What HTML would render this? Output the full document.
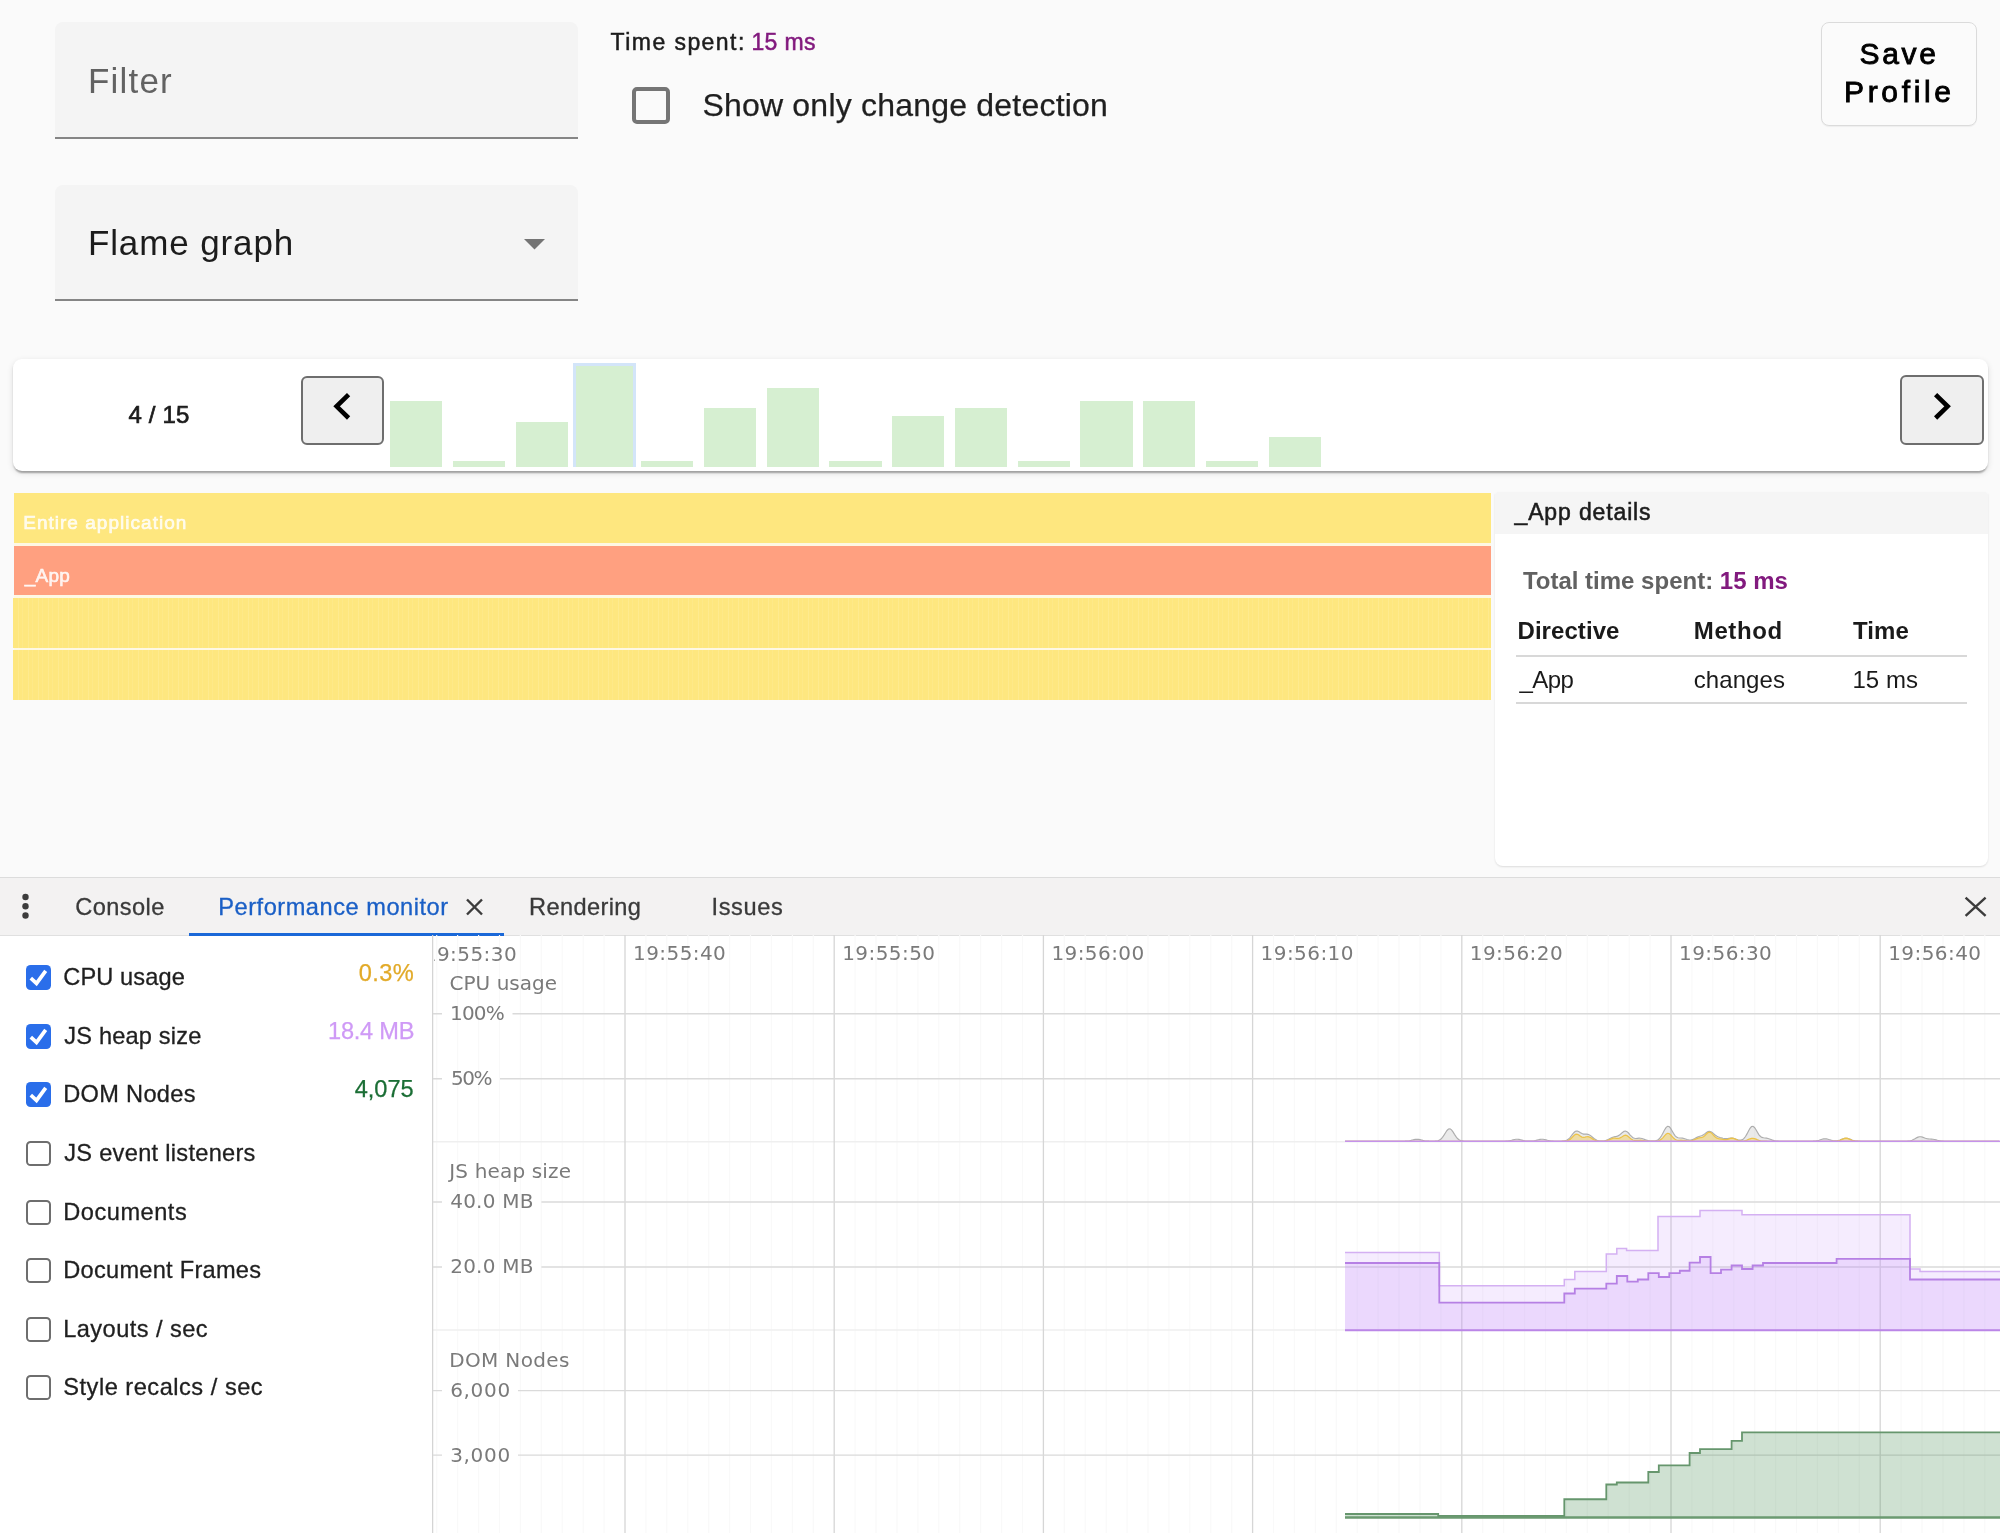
<!DOCTYPE html><html lang="en"><head><meta charset="utf-8"><title>Angular DevTools Profiler</title><style>
html,body{margin:0;padding:0}
body{width:2000px;height:1533px;overflow:hidden;background:#fafafa;position:relative;font-family:"Liberation Sans",Arial,sans-serif}
.tx{position:absolute;line-height:1;white-space:pre;font-family:"Liberation Sans",Arial,sans-serif}
.dv{font-family:"DejaVu Sans","Liberation Sans",sans-serif}
.abs{position:absolute}
main{position:absolute;left:0;top:0;width:2000px;height:1533px;will-change:transform}
.field{position:absolute;left:55px;width:523px;height:114.5px;background:#f4f4f4;border-radius:8px 8px 0 0;border-bottom:2px solid #858585}
.card{position:absolute;left:13px;top:358.5px;width:1974.5px;height:112px;background:#fff;border-radius:9px;box-shadow:0 4px 2px -2px rgba(0,0,0,.2),0 2px 2px rgba(0,0,0,.14),0 2px 6px rgba(0,0,0,.12)}
.navbtn{position:absolute;box-sizing:border-box;background:#efefef;border:2px solid #6e6e6e;border-radius:6px}
.bar{position:absolute;background:#d6efd1}
.frow{position:absolute;left:14px;width:1477px;height:50px}
.cb{position:absolute;left:25.75px;width:25px;height:25px;box-sizing:border-box;border-radius:4.6px}
.cb.on{background:#2a6eea}
.cb.off{background:#fff;border:2px solid #6e6e6e}
</style></head><body><main>
<section class="controls">
<div class="field" style="top:22px"></div>
<div class="tx" id="t_filter" style="left:87.90px;top:63.00px;font-size:35px;letter-spacing:1.220px;color:#626262;">Filter</div>
<div class="field" style="top:184.5px"></div>
<div class="tx" id="t_flame" style="left:87.90px;top:225.00px;font-size:35px;letter-spacing:0.890px;color:#1c1c1c;">Flame graph</div>
<svg class="abs" style="left:523.5px;top:239px" width="21" height="11" viewBox="0 0 21 11"><path d="M0 0H21L10.5 10.5Z" fill="#747474"/></svg>
<div class="tx" id="t_timespent" style="left:610.60px;top:31.00px;font-size:23px;letter-spacing:1.440px;-webkit-text-stroke:0.5px;color:#1c1c1c;">Time spent:</div>
<div class="tx" id="t_timeval" style="left:751.40px;top:31.00px;font-size:23px;letter-spacing:0.400px;-webkit-text-stroke:0.5px;color:#821a7e;">15 ms</div>
<div class="abs" style="left:632px;top:86.5px;width:38px;height:37.5px;box-sizing:border-box;border:4px solid #757575;border-radius:5px"></div>
<div class="tx" id="t_showonly" style="left:702.40px;top:89.00px;font-size:32px;letter-spacing:0.208px;-webkit-text-stroke:0.25px;color:#1f1f1f;">Show only change detection</div>
<div class="abs" style="left:1821px;top:22px;width:156px;height:103.5px;box-sizing:border-box;border:1.7px solid #dbdbdb;border-radius:8px;background:#fbfbfb;box-shadow:0 1px 1px rgba(0,0,0,.05)"></div>
<div class="tx" id="t_save" style="left:1859.50px;top:39.00px;font-size:30px;letter-spacing:2.667px;-webkit-text-stroke:0.9px;color:#000;">Save</div>
<div class="tx" id="t_profile" style="left:1844.00px;top:77.00px;font-size:30px;letter-spacing:3.667px;-webkit-text-stroke:0.9px;color:#000;">Profile</div>
</section>
<section class="frames">
<div class="card"></div>
<div class="tx" id="t_count" style="left:128.50px;top:403.00px;font-size:24px;letter-spacing:0.160px;-webkit-text-stroke:0.7px;color:#1c1c1c;">4 / 15</div>
<div class="navbtn" style="left:301px;top:375.5px;width:83px;height:69.25px"></div>
<svg class="abs" style="left:328px;top:388px" width="30" height="36" viewBox="0 0 30 36"><path d="M20.6 6.6L8.6 18.3L20.6 30" fill="none" stroke="#000" stroke-width="4.6"/></svg>
<div class="navbtn" style="left:1900.25px;top:375.25px;width:83.25px;height:69.25px"></div>
<svg class="abs" style="left:1927px;top:388px" width="30" height="36" viewBox="0 0 30 36"><path d="M8.6 6.6L20.6 18.3L8.6 30" fill="none" stroke="#000" stroke-width="4.6"/></svg>
<div class="bar" style="left:390.00px;top:401.25px;width:52.25px;height:65.25px"></div>
<div class="bar" style="left:452.75px;top:460.75px;width:52.25px;height:5.75px"></div>
<div class="bar" style="left:515.50px;top:422.00px;width:52.25px;height:44.50px"></div>
<div class="bar" style="left:572.75px;top:362.5px;width:62.75px;height:104px;box-sizing:border-box;border:3.2px solid #d3e5f9;border-bottom:none"></div>
<div class="bar" style="left:641.00px;top:460.75px;width:52.25px;height:5.75px"></div>
<div class="bar" style="left:703.75px;top:408.25px;width:52.25px;height:58.25px"></div>
<div class="bar" style="left:766.50px;top:387.50px;width:52.25px;height:79.00px"></div>
<div class="bar" style="left:829.25px;top:460.75px;width:52.25px;height:5.75px"></div>
<div class="bar" style="left:892.00px;top:416.00px;width:52.25px;height:50.50px"></div>
<div class="bar" style="left:954.75px;top:408.25px;width:52.25px;height:58.25px"></div>
<div class="bar" style="left:1017.50px;top:460.75px;width:52.25px;height:5.75px"></div>
<div class="bar" style="left:1080.25px;top:401.25px;width:52.25px;height:65.25px"></div>
<div class="bar" style="left:1143.00px;top:401.25px;width:52.25px;height:65.25px"></div>
<div class="bar" style="left:1205.75px;top:460.75px;width:52.25px;height:5.75px"></div>
<div class="bar" style="left:1268.50px;top:436.75px;width:52.25px;height:29.75px"></div>
</section>
<section class="flame">
<div class="abs" style="left:14px;top:493px;width:1477px;height:207px;background:#fef8e4"></div>
<div class="frow" style="top:493px;height:49.6px;background:#fee77f"></div>
<div class="frow" style="top:545.6px;height:49.8px;background:#ffa080"></div>
<div class="frow" style="left:13px;width:1478px;top:598.3px;height:49.6px;background:repeating-linear-gradient(90deg,rgba(255,255,255,0) 0,rgba(255,255,255,0) 5px,rgba(255,255,255,.12) 5px,rgba(255,255,255,.12) 6px,rgba(255,255,255,0) 6px,rgba(255,255,255,0) 9px,rgba(255,255,255,.07) 9px,rgba(255,255,255,.07) 10px),#fee77f"></div>
<div class="frow" style="left:13px;width:1478px;top:650.4px;height:49.6px;background:repeating-linear-gradient(90deg,rgba(255,255,255,0) 0,rgba(255,255,255,0) 5px,rgba(255,255,255,.12) 5px,rgba(255,255,255,.12) 6px,rgba(255,255,255,0) 6px,rgba(255,255,255,0) 9px,rgba(255,255,255,.07) 9px,rgba(255,255,255,.07) 10px),#fee77f"></div>
<div class="tx" id="t_entire" style="left:23.20px;top:513.00px;font-size:19px;letter-spacing:1.024px;-webkit-text-stroke:0.7px;color:rgba(255,255,255,0.8);">Entire application</div>
<div class="tx" id="t_app" style="left:24.80px;top:566.00px;font-size:19px;letter-spacing:0.200px;-webkit-text-stroke:0.6px;color:rgba(255,255,255,0.85);">_App</div>
</section>
<section class="details">
<div class="abs" style="left:1495px;top:491.7px;width:493px;height:374.5px;background:#fff;border-radius:3px 3px 8px 8px;box-shadow:0 1px 2px rgba(0,0,0,.12);overflow:hidden"><div style="height:42.2px;background:#f5f5f5"></div></div>
<div class="tx" id="t_appdetails" style="left:1514.50px;top:501.00px;font-size:23px;letter-spacing:0.864px;-webkit-text-stroke:0.55px;color:#1c1c1c;">_App details</div>
<div class="tx" id="t_total" style="left:1522.90px;top:569.00px;font-size:24px;font-weight:700;"><span style="color:#616161">Total time spent: </span><span style="color:#821a7e">15 ms</span></div>
<div class="tx" id="t_hdir" style="left:1517.50px;top:619.00px;font-size:24px;letter-spacing:0.062px;font-weight:700;color:#1a1a1a;">Directive</div>
<div class="tx" id="t_hmeth" style="left:1693.80px;top:619.00px;font-size:24px;letter-spacing:0.600px;font-weight:700;color:#1a1a1a;">Method</div>
<div class="tx" id="t_htime" style="left:1853.00px;top:619.00px;font-size:24px;letter-spacing:0.067px;font-weight:700;color:#1a1a1a;">Time</div>
<div class="abs" style="left:1516px;top:654.7px;width:451px;height:2px;background:#d8d8d8"></div>
<div class="tx" id="t_rdir" style="left:1519.50px;top:668.00px;font-size:24px;letter-spacing:-0.567px;color:#1a1a1a;">_App</div>
<div class="tx" id="t_rmeth" style="left:1693.80px;top:668.00px;font-size:24px;letter-spacing:0.067px;color:#1a1a1a;">changes</div>
<div class="tx" id="t_rtime" style="left:1852.40px;top:668.00px;font-size:24px;letter-spacing:0.050px;color:#1a1a1a;">15 ms</div>
<div class="abs" style="left:1516px;top:702.2px;width:451px;height:2px;background:#d8d8d8"></div>
</section>
<section class="drawer">
<div class="abs" style="left:0;top:876.5px;width:2000px;height:657px;background:#fff"></div>
<div class="abs" style="left:0;top:876.5px;width:2000px;height:59.5px;background:#f3f2f2;border-top:1.5px solid #dcdcdc;border-bottom:1.5px solid #e0e0e0;box-sizing:border-box"></div>
<svg class="abs" style="left:18px;top:890px" width="16" height="32" viewBox="0 0 16 32"><circle cx="7.5" cy="7" r="3.2" fill="#3c3c3c"/><circle cx="7.5" cy="16.25" r="3.2" fill="#3c3c3c"/><circle cx="7.5" cy="25.5" r="3.2" fill="#3c3c3c"/></svg>
<div class="tx" id="t_console" style="left:75.25px;top:896.00px;font-size:23.6px;letter-spacing:0.417px;-webkit-text-stroke:0.3px;color:#3a3a3a;">Console</div>
<div class="tx" id="t_perfmon" style="left:218.25px;top:896.00px;font-size:23.6px;letter-spacing:0.528px;-webkit-text-stroke:0.3px;color:#1a5fc6;">Performance monitor</div>
<div class="tx" id="t_rendering" style="left:529.00px;top:896.00px;font-size:23.6px;letter-spacing:0.375px;-webkit-text-stroke:0.3px;color:#3a3a3a;">Rendering</div>
<div class="tx" id="t_issues" style="left:711.50px;top:896.00px;font-size:23.6px;letter-spacing:0.600px;-webkit-text-stroke:0.3px;color:#3a3a3a;">Issues</div>
<svg class="abs" style="left:464px;top:896px" width="22" height="22" viewBox="0 0 22 22"><path d="M3 3.5L18 18.5M18 3.5L3 18.5" stroke="#3c3c3c" stroke-width="2.4" fill="none"/></svg>
<div class="abs" style="left:188.75px;top:932.6px;width:315.5px;height:3.2px;background:#1a68d8"></div>
<svg class="abs" style="left:1962px;top:894px" width="26" height="26" viewBox="0 0 26 26"><path d="M3.6 3.6L23.6 21.8M23.6 3.6L3.6 21.8" stroke="#3c3c3c" stroke-width="2.4" fill="none"/></svg>
<div class="cb on" style="top:965.00px"><svg width="25" height="25" viewBox="0 0 25 25" style="display:block"><path d="M4.8 13.2L10.5 18.4L19.7 5.8" fill="none" stroke="#fff" stroke-width="3.7"/></svg></div>
<div class="cb on" style="top:1023.63px"><svg width="25" height="25" viewBox="0 0 25 25" style="display:block"><path d="M4.8 13.2L10.5 18.4L19.7 5.8" fill="none" stroke="#fff" stroke-width="3.7"/></svg></div>
<div class="cb on" style="top:1082.26px"><svg width="25" height="25" viewBox="0 0 25 25" style="display:block"><path d="M4.8 13.2L10.5 18.4L19.7 5.8" fill="none" stroke="#fff" stroke-width="3.7"/></svg></div>
<div class="cb off" style="top:1140.89px"></div>
<div class="cb off" style="top:1199.52px"></div>
<div class="cb off" style="top:1258.15px"></div>
<div class="cb off" style="top:1316.78px"></div>
<div class="cb off" style="top:1375.41px"></div>
<div class="tx" id="t_lab0" style="left:63.25px;top:966.00px;font-size:23.6px;letter-spacing:0.125px;-webkit-text-stroke:0.3px;color:#1f1f1f;">CPU usage</div>
<div class="tx" id="t_lab1" style="left:64.25px;top:1025.00px;font-size:23.6px;letter-spacing:0.186px;-webkit-text-stroke:0.3px;color:#1f1f1f;">JS heap size</div>
<div class="tx" id="t_lab2" style="left:63.25px;top:1083.00px;font-size:23.6px;letter-spacing:0.306px;-webkit-text-stroke:0.3px;color:#1f1f1f;">DOM Nodes</div>
<div class="tx" id="t_lab3" style="left:64.25px;top:1142.00px;font-size:23.6px;letter-spacing:0.291px;-webkit-text-stroke:0.3px;color:#1f1f1f;">JS event listeners</div>
<div class="tx" id="t_lab4" style="left:63.25px;top:1201.00px;font-size:23.6px;letter-spacing:0.519px;-webkit-text-stroke:0.3px;color:#1f1f1f;">Documents</div>
<div class="tx" id="t_lab5" style="left:63.25px;top:1259.00px;font-size:23.6px;letter-spacing:0.268px;-webkit-text-stroke:0.3px;color:#1f1f1f;">Document Frames</div>
<div class="tx" id="t_lab6" style="left:63.25px;top:1318.00px;font-size:23.6px;letter-spacing:0.438px;-webkit-text-stroke:0.3px;color:#1f1f1f;">Layouts / sec</div>
<div class="tx" id="t_lab7" style="left:63.25px;top:1376.00px;font-size:23.6px;letter-spacing:0.514px;-webkit-text-stroke:0.3px;color:#1f1f1f;">Style recalcs / sec</div>
<div class="tx" id="t_v0" style="left:358.75px;top:962.00px;font-size:23.6px;letter-spacing:0.417px;-webkit-text-stroke:0.25px;color:#e2aa28;">0.3%</div>
<div class="tx" id="t_v1" style="left:328.00px;top:1020.00px;font-size:23.6px;letter-spacing:-0.233px;-webkit-text-stroke:0.25px;color:#cf9af6;">18.4 MB</div>
<div class="tx" id="t_v2" style="left:354.70px;top:1078.00px;font-size:23.6px;letter-spacing:-0.025px;-webkit-text-stroke:0.25px;color:#1b6e35;">4,075</div>
</section>
<section class="perfmon-chart">
<svg class="abs" style="left:432px;top:935px" width="1568" height="598" viewBox="432 935 1568 598">
<path d="M436.7 935V1533M457.6 935V1533M478.6 935V1533M499.5 935V1533M520.4 935V1533M541.3 935V1533M562.2 935V1533M583.2 935V1533M604.1 935V1533M645.9 935V1533M666.8 935V1533M687.8 935V1533M708.7 935V1533M729.6 935V1533M750.5 935V1533M771.4 935V1533M792.4 935V1533M813.3 935V1533M855.1 935V1533M876.0 935V1533M897.0 935V1533M917.9 935V1533M938.8 935V1533M959.7 935V1533M980.6 935V1533M1001.6 935V1533M1022.5 935V1533M1064.3 935V1533M1085.2 935V1533M1106.2 935V1533M1127.1 935V1533M1148.0 935V1533M1168.9 935V1533M1189.8 935V1533M1210.8 935V1533M1231.7 935V1533M1273.5 935V1533M1294.4 935V1533M1315.4 935V1533M1336.3 935V1533M1357.2 935V1533M1378.1 935V1533M1399.0 935V1533M1420.0 935V1533M1440.9 935V1533M1482.7 935V1533M1503.6 935V1533M1524.6 935V1533M1545.5 935V1533M1566.4 935V1533M1587.3 935V1533M1608.2 935V1533M1629.2 935V1533M1650.1 935V1533M1691.9 935V1533M1712.8 935V1533M1733.8 935V1533M1754.7 935V1533M1775.6 935V1533M1796.5 935V1533M1817.4 935V1533M1838.4 935V1533M1859.3 935V1533M1901.1 935V1533M1922.0 935V1533M1943.0 935V1533M1963.9 935V1533M1984.8 935V1533" stroke="#f9f9f9" stroke-width="1.2" fill="none"/>
<path d="M433 1141.7H2000M433 1330H2000" stroke="#efefef" stroke-width="1.5" fill="none"/>
<path d="M625.0 935V1533M834.2 935V1533M1043.4 935V1533M1252.6 935V1533M1461.8 935V1533M1671.0 935V1533M1880.2 935V1533" stroke="#d6d6d6" stroke-width="1.3" fill="none"/>
<path d="M432.5 935V1533" stroke="#d4d4d4" stroke-width="1.5" fill="none"/>
<path d="M512.5 1013.75H2000M433 1013.75H442M500.0 1078.75H2000M433 1078.75H442M541.4 1202.00H2000M433 1202.00H442M541.4 1267.00H2000M433 1267.00H442M518.0 1390.60H2000M433 1390.60H442M518.0 1455.20H2000M433 1455.20H442" stroke="#dadada" stroke-width="1.3" fill="none"/>
<path d="M1345.0 1141.25L1346.5 1141.25L1348.0 1141.25L1349.5 1141.25L1351.0 1141.25L1352.5 1141.25L1354.0 1141.25L1355.5 1141.25L1357.0 1141.25L1358.5 1141.25L1360.0 1141.25L1361.5 1141.25L1363.0 1141.25L1364.5 1141.25L1366.0 1141.25L1367.5 1141.25L1369.0 1141.25L1370.5 1141.25L1372.0 1141.25L1373.5 1141.25L1375.0 1141.25L1376.5 1141.25L1378.0 1141.25L1379.5 1141.25L1381.0 1141.25L1382.5 1141.25L1384.0 1141.25L1385.5 1141.25L1387.0 1141.25L1388.5 1141.25L1390.0 1141.25L1391.5 1141.25L1393.0 1141.25L1394.5 1141.25L1396.0 1141.25L1397.5 1141.25L1399.0 1141.25L1400.5 1141.25L1402.0 1141.24L1403.5 1141.22L1405.0 1141.18L1406.5 1141.10L1408.0 1140.96L1409.5 1140.72L1411.0 1140.40L1412.5 1140.01L1414.0 1139.63L1415.5 1139.35L1417.0 1139.25L1418.5 1139.35L1420.0 1139.63L1421.5 1140.01L1423.0 1140.40L1424.5 1140.72L1426.0 1140.95L1427.5 1141.10L1429.0 1141.18L1430.5 1141.22L1432.0 1141.23L1433.5 1141.22L1435.0 1141.16L1436.5 1141.02L1438.0 1140.70L1439.5 1140.07L1441.0 1138.98L1442.5 1137.32L1444.0 1135.13L1445.5 1132.69L1447.0 1130.47L1448.5 1129.04L1450.0 1128.82L1451.5 1129.88L1453.0 1131.89L1454.5 1134.33L1456.0 1136.64L1457.5 1138.49L1459.0 1139.77L1460.5 1140.53L1462.0 1140.94L1463.5 1141.13L1465.0 1141.21L1466.5 1141.24L1468.0 1141.25L1469.5 1141.25L1471.0 1141.25L1472.5 1141.25L1474.0 1141.25L1475.5 1141.25L1477.0 1141.25L1478.5 1141.25L1480.0 1141.25L1481.5 1141.25L1483.0 1141.25L1484.5 1141.25L1486.0 1141.25L1487.5 1141.25L1489.0 1141.25L1490.5 1141.25L1492.0 1141.25L1493.5 1141.25L1495.0 1141.25L1496.5 1141.25L1498.0 1141.25L1499.5 1141.25L1501.0 1141.25L1502.5 1141.24L1504.0 1141.21L1505.5 1141.16L1507.0 1141.06L1508.5 1140.89L1510.0 1140.62L1511.5 1140.27L1513.0 1139.88L1514.5 1139.52L1516.0 1139.30L1517.5 1139.26L1519.0 1139.43L1520.5 1139.75L1522.0 1140.14L1523.5 1140.51L1525.0 1140.81L1526.5 1141.01L1528.0 1141.12L1529.5 1141.15L1531.0 1141.12L1532.5 1141.01L1534.0 1140.81L1535.5 1140.51L1537.0 1140.14L1538.5 1139.75L1540.0 1139.43L1541.5 1139.26L1543.0 1139.30L1544.5 1139.52L1546.0 1139.88L1547.5 1140.27L1549.0 1140.62L1550.5 1140.89L1552.0 1141.06L1553.5 1141.16L1555.0 1141.21L1556.5 1141.24L1558.0 1141.24L1559.5 1141.24L1561.0 1141.22L1562.5 1141.15L1564.0 1141.00L1565.5 1140.68L1567.0 1140.06L1568.5 1139.05L1570.0 1137.56L1571.5 1135.70L1573.0 1133.73L1574.5 1132.06L1576.0 1131.09L1577.5 1131.00L1579.0 1131.66L1580.5 1132.68L1582.0 1133.58L1583.5 1134.08L1585.0 1134.18L1586.5 1134.15L1588.0 1134.31L1589.5 1134.90L1591.0 1135.93L1592.5 1137.20L1594.0 1138.47L1595.5 1139.53L1597.0 1140.29L1598.5 1140.76L1600.0 1140.99L1601.5 1141.06L1603.0 1140.99L1604.5 1140.77L1606.0 1140.36L1607.5 1139.77L1609.0 1139.02L1610.5 1138.21L1612.0 1137.48L1613.5 1136.94L1615.0 1136.60L1616.5 1136.32L1618.0 1135.86L1619.5 1135.02L1621.0 1133.80L1622.5 1132.44L1624.0 1131.38L1625.5 1131.05L1627.0 1131.64L1628.5 1133.01L1630.0 1134.76L1631.5 1136.43L1633.0 1137.66L1634.5 1138.31L1636.0 1138.46L1637.5 1138.33L1639.0 1138.19L1640.5 1138.22L1642.0 1138.50L1643.5 1139.00L1645.0 1139.59L1646.5 1140.14L1648.0 1140.59L1649.5 1140.89L1651.0 1141.06L1652.5 1141.12L1654.0 1141.07L1655.5 1140.87L1657.0 1140.39L1658.5 1139.47L1660.0 1137.94L1661.5 1135.72L1663.0 1132.94L1664.5 1130.02L1666.0 1127.60L1667.5 1126.32L1669.0 1126.54L1670.5 1128.18L1672.0 1130.69L1673.5 1133.37L1675.0 1135.60L1676.5 1137.06L1678.0 1137.78L1679.5 1138.00L1681.0 1138.04L1682.5 1138.16L1684.0 1138.47L1685.5 1138.94L1687.0 1139.45L1688.5 1139.85L1690.0 1140.00L1691.5 1139.83L1693.0 1139.35L1694.5 1138.65L1696.0 1137.86L1697.5 1137.13L1699.0 1136.54L1700.5 1136.05L1702.0 1135.50L1703.5 1134.71L1705.0 1133.64L1706.5 1132.47L1708.0 1131.55L1709.5 1131.23L1711.0 1131.67L1712.5 1132.72L1714.0 1134.06L1715.5 1135.32L1717.0 1136.29L1718.5 1136.96L1720.0 1137.45L1721.5 1137.87L1723.0 1138.25L1724.5 1138.55L1726.0 1138.67L1727.5 1138.59L1729.0 1138.38L1730.5 1138.18L1732.0 1138.15L1733.5 1138.36L1735.0 1138.80L1736.5 1139.35L1738.0 1139.86L1739.5 1140.18L1741.0 1140.15L1742.5 1139.62L1744.0 1138.43L1745.5 1136.50L1747.0 1133.90L1748.5 1130.97L1750.0 1128.30L1751.5 1126.58L1753.0 1126.28L1754.5 1127.47L1756.0 1129.74L1757.5 1132.40L1759.0 1134.78L1760.5 1136.48L1762.0 1137.42L1763.5 1137.80L1765.0 1137.95L1766.5 1138.12L1768.0 1138.47L1769.5 1138.99L1771.0 1139.58L1772.5 1140.14L1774.0 1140.59L1775.5 1140.89L1777.0 1141.08L1778.5 1141.18L1780.0 1141.22L1781.5 1141.24L1783.0 1141.25L1784.5 1141.25L1786.0 1141.25L1787.5 1141.25L1789.0 1141.25L1790.5 1141.25L1792.0 1141.25L1793.5 1141.25L1795.0 1141.25L1796.5 1141.25L1798.0 1141.25L1799.5 1141.25L1801.0 1141.25L1802.5 1141.25L1804.0 1141.25L1805.5 1141.25L1807.0 1141.25L1808.5 1141.25L1810.0 1141.24L1811.5 1141.22L1813.0 1141.17L1814.5 1141.07L1816.0 1140.88L1817.5 1140.59L1819.0 1140.18L1820.5 1139.70L1822.0 1139.23L1823.5 1138.88L1825.0 1138.75L1826.5 1138.88L1828.0 1139.23L1829.5 1139.70L1831.0 1140.17L1832.5 1140.55L1834.0 1140.78L1835.5 1140.84L1837.0 1140.72L1838.5 1140.42L1840.0 1139.96L1841.5 1139.39L1843.0 1138.82L1844.5 1138.41L1846.0 1138.25L1847.5 1138.41L1849.0 1138.82L1850.5 1139.39L1852.0 1139.97L1853.5 1140.46L1855.0 1140.81L1856.5 1141.03L1858.0 1141.15L1859.5 1141.21L1861.0 1141.24L1862.5 1141.25L1864.0 1141.25L1865.5 1141.25L1867.0 1141.25L1868.5 1141.25L1870.0 1141.25L1871.5 1141.25L1873.0 1141.25L1874.5 1141.25L1876.0 1141.25L1877.5 1141.25L1879.0 1141.25L1880.5 1141.25L1882.0 1141.25L1883.5 1141.25L1885.0 1141.25L1886.5 1141.25L1888.0 1141.25L1889.5 1141.25L1891.0 1141.25L1892.5 1141.25L1894.0 1141.25L1895.5 1141.25L1897.0 1141.25L1898.5 1141.25L1900.0 1141.25L1901.5 1141.25L1903.0 1141.25L1904.5 1141.23L1906.0 1141.21L1907.5 1141.14L1909.0 1140.99L1910.5 1140.72L1912.0 1140.26L1913.5 1139.59L1915.0 1138.76L1916.5 1137.87L1918.0 1137.14L1919.5 1136.73L1921.0 1136.74L1922.5 1137.13L1924.0 1137.73L1925.5 1138.31L1927.0 1138.73L1928.5 1138.94L1930.0 1139.01L1931.5 1139.06L1933.0 1139.21L1934.5 1139.49L1936.0 1139.87L1937.5 1140.27L1939.0 1140.62L1940.5 1140.89L1942.0 1141.06L1943.5 1141.16L1945.0 1141.21L1946.5 1141.24L1948.0 1141.25L1949.5 1141.25L1951.0 1141.25L1952.5 1141.25L1954.0 1141.25L1955.5 1141.25L1957.0 1141.25L1958.5 1141.25L1960.0 1141.25L1961.5 1141.25L1963.0 1141.25L1964.5 1141.25L1966.0 1141.25L1967.5 1141.25L1969.0 1141.25L1970.5 1141.25L1972.0 1141.25L1973.5 1141.25L1975.0 1141.25L1976.5 1141.25L1978.0 1141.25L1979.5 1141.25L1981.0 1141.25L1982.5 1141.25L1984.0 1141.25L1985.5 1141.25L1987.0 1141.25L1988.5 1141.25L1990.0 1141.25L1991.5 1141.25L1993.0 1141.25L1994.5 1141.25L1996.0 1141.25L1997.5 1141.25L1999.0 1141.25V1141.25H1345.0Z" fill="rgba(140,140,140,.18)" stroke="none"/>
<path d="M1345.0 1141.25L1346.5 1141.25L1348.0 1141.25L1349.5 1141.25L1351.0 1141.25L1352.5 1141.25L1354.0 1141.25L1355.5 1141.25L1357.0 1141.25L1358.5 1141.25L1360.0 1141.25L1361.5 1141.25L1363.0 1141.25L1364.5 1141.25L1366.0 1141.25L1367.5 1141.25L1369.0 1141.25L1370.5 1141.25L1372.0 1141.25L1373.5 1141.25L1375.0 1141.25L1376.5 1141.25L1378.0 1141.25L1379.5 1141.25L1381.0 1141.25L1382.5 1141.25L1384.0 1141.25L1385.5 1141.25L1387.0 1141.25L1388.5 1141.25L1390.0 1141.25L1391.5 1141.25L1393.0 1141.25L1394.5 1141.25L1396.0 1141.25L1397.5 1141.25L1399.0 1141.25L1400.5 1141.25L1402.0 1141.24L1403.5 1141.22L1405.0 1141.18L1406.5 1141.10L1408.0 1140.96L1409.5 1140.72L1411.0 1140.40L1412.5 1140.01L1414.0 1139.63L1415.5 1139.35L1417.0 1139.25L1418.5 1139.35L1420.0 1139.63L1421.5 1140.01L1423.0 1140.40L1424.5 1140.72L1426.0 1140.95L1427.5 1141.10L1429.0 1141.18L1430.5 1141.22L1432.0 1141.23L1433.5 1141.22L1435.0 1141.16L1436.5 1141.02L1438.0 1140.70L1439.5 1140.07L1441.0 1138.98L1442.5 1137.32L1444.0 1135.13L1445.5 1132.69L1447.0 1130.47L1448.5 1129.04L1450.0 1128.82L1451.5 1129.88L1453.0 1131.89L1454.5 1134.33L1456.0 1136.64L1457.5 1138.49L1459.0 1139.77L1460.5 1140.53L1462.0 1140.94L1463.5 1141.13L1465.0 1141.21L1466.5 1141.24L1468.0 1141.25L1469.5 1141.25L1471.0 1141.25L1472.5 1141.25L1474.0 1141.25L1475.5 1141.25L1477.0 1141.25L1478.5 1141.25L1480.0 1141.25L1481.5 1141.25L1483.0 1141.25L1484.5 1141.25L1486.0 1141.25L1487.5 1141.25L1489.0 1141.25L1490.5 1141.25L1492.0 1141.25L1493.5 1141.25L1495.0 1141.25L1496.5 1141.25L1498.0 1141.25L1499.5 1141.25L1501.0 1141.25L1502.5 1141.24L1504.0 1141.21L1505.5 1141.16L1507.0 1141.06L1508.5 1140.89L1510.0 1140.62L1511.5 1140.27L1513.0 1139.88L1514.5 1139.52L1516.0 1139.30L1517.5 1139.26L1519.0 1139.43L1520.5 1139.75L1522.0 1140.14L1523.5 1140.51L1525.0 1140.81L1526.5 1141.01L1528.0 1141.12L1529.5 1141.15L1531.0 1141.12L1532.5 1141.01L1534.0 1140.81L1535.5 1140.51L1537.0 1140.14L1538.5 1139.75L1540.0 1139.43L1541.5 1139.26L1543.0 1139.30L1544.5 1139.52L1546.0 1139.88L1547.5 1140.27L1549.0 1140.62L1550.5 1140.89L1552.0 1141.06L1553.5 1141.16L1555.0 1141.21L1556.5 1141.24L1558.0 1141.24L1559.5 1141.24L1561.0 1141.22L1562.5 1141.15L1564.0 1141.00L1565.5 1140.68L1567.0 1140.06L1568.5 1139.05L1570.0 1137.56L1571.5 1135.70L1573.0 1133.73L1574.5 1132.06L1576.0 1131.09L1577.5 1131.00L1579.0 1131.66L1580.5 1132.68L1582.0 1133.58L1583.5 1134.08L1585.0 1134.18L1586.5 1134.15L1588.0 1134.31L1589.5 1134.90L1591.0 1135.93L1592.5 1137.20L1594.0 1138.47L1595.5 1139.53L1597.0 1140.29L1598.5 1140.76L1600.0 1140.99L1601.5 1141.06L1603.0 1140.99L1604.5 1140.77L1606.0 1140.36L1607.5 1139.77L1609.0 1139.02L1610.5 1138.21L1612.0 1137.48L1613.5 1136.94L1615.0 1136.60L1616.5 1136.32L1618.0 1135.86L1619.5 1135.02L1621.0 1133.80L1622.5 1132.44L1624.0 1131.38L1625.5 1131.05L1627.0 1131.64L1628.5 1133.01L1630.0 1134.76L1631.5 1136.43L1633.0 1137.66L1634.5 1138.31L1636.0 1138.46L1637.5 1138.33L1639.0 1138.19L1640.5 1138.22L1642.0 1138.50L1643.5 1139.00L1645.0 1139.59L1646.5 1140.14L1648.0 1140.59L1649.5 1140.89L1651.0 1141.06L1652.5 1141.12L1654.0 1141.07L1655.5 1140.87L1657.0 1140.39L1658.5 1139.47L1660.0 1137.94L1661.5 1135.72L1663.0 1132.94L1664.5 1130.02L1666.0 1127.60L1667.5 1126.32L1669.0 1126.54L1670.5 1128.18L1672.0 1130.69L1673.5 1133.37L1675.0 1135.60L1676.5 1137.06L1678.0 1137.78L1679.5 1138.00L1681.0 1138.04L1682.5 1138.16L1684.0 1138.47L1685.5 1138.94L1687.0 1139.45L1688.5 1139.85L1690.0 1140.00L1691.5 1139.83L1693.0 1139.35L1694.5 1138.65L1696.0 1137.86L1697.5 1137.13L1699.0 1136.54L1700.5 1136.05L1702.0 1135.50L1703.5 1134.71L1705.0 1133.64L1706.5 1132.47L1708.0 1131.55L1709.5 1131.23L1711.0 1131.67L1712.5 1132.72L1714.0 1134.06L1715.5 1135.32L1717.0 1136.29L1718.5 1136.96L1720.0 1137.45L1721.5 1137.87L1723.0 1138.25L1724.5 1138.55L1726.0 1138.67L1727.5 1138.59L1729.0 1138.38L1730.5 1138.18L1732.0 1138.15L1733.5 1138.36L1735.0 1138.80L1736.5 1139.35L1738.0 1139.86L1739.5 1140.18L1741.0 1140.15L1742.5 1139.62L1744.0 1138.43L1745.5 1136.50L1747.0 1133.90L1748.5 1130.97L1750.0 1128.30L1751.5 1126.58L1753.0 1126.28L1754.5 1127.47L1756.0 1129.74L1757.5 1132.40L1759.0 1134.78L1760.5 1136.48L1762.0 1137.42L1763.5 1137.80L1765.0 1137.95L1766.5 1138.12L1768.0 1138.47L1769.5 1138.99L1771.0 1139.58L1772.5 1140.14L1774.0 1140.59L1775.5 1140.89L1777.0 1141.08L1778.5 1141.18L1780.0 1141.22L1781.5 1141.24L1783.0 1141.25L1784.5 1141.25L1786.0 1141.25L1787.5 1141.25L1789.0 1141.25L1790.5 1141.25L1792.0 1141.25L1793.5 1141.25L1795.0 1141.25L1796.5 1141.25L1798.0 1141.25L1799.5 1141.25L1801.0 1141.25L1802.5 1141.25L1804.0 1141.25L1805.5 1141.25L1807.0 1141.25L1808.5 1141.25L1810.0 1141.24L1811.5 1141.22L1813.0 1141.17L1814.5 1141.07L1816.0 1140.88L1817.5 1140.59L1819.0 1140.18L1820.5 1139.70L1822.0 1139.23L1823.5 1138.88L1825.0 1138.75L1826.5 1138.88L1828.0 1139.23L1829.5 1139.70L1831.0 1140.17L1832.5 1140.55L1834.0 1140.78L1835.5 1140.84L1837.0 1140.72L1838.5 1140.42L1840.0 1139.96L1841.5 1139.39L1843.0 1138.82L1844.5 1138.41L1846.0 1138.25L1847.5 1138.41L1849.0 1138.82L1850.5 1139.39L1852.0 1139.97L1853.5 1140.46L1855.0 1140.81L1856.5 1141.03L1858.0 1141.15L1859.5 1141.21L1861.0 1141.24L1862.5 1141.25L1864.0 1141.25L1865.5 1141.25L1867.0 1141.25L1868.5 1141.25L1870.0 1141.25L1871.5 1141.25L1873.0 1141.25L1874.5 1141.25L1876.0 1141.25L1877.5 1141.25L1879.0 1141.25L1880.5 1141.25L1882.0 1141.25L1883.5 1141.25L1885.0 1141.25L1886.5 1141.25L1888.0 1141.25L1889.5 1141.25L1891.0 1141.25L1892.5 1141.25L1894.0 1141.25L1895.5 1141.25L1897.0 1141.25L1898.5 1141.25L1900.0 1141.25L1901.5 1141.25L1903.0 1141.25L1904.5 1141.23L1906.0 1141.21L1907.5 1141.14L1909.0 1140.99L1910.5 1140.72L1912.0 1140.26L1913.5 1139.59L1915.0 1138.76L1916.5 1137.87L1918.0 1137.14L1919.5 1136.73L1921.0 1136.74L1922.5 1137.13L1924.0 1137.73L1925.5 1138.31L1927.0 1138.73L1928.5 1138.94L1930.0 1139.01L1931.5 1139.06L1933.0 1139.21L1934.5 1139.49L1936.0 1139.87L1937.5 1140.27L1939.0 1140.62L1940.5 1140.89L1942.0 1141.06L1943.5 1141.16L1945.0 1141.21L1946.5 1141.24L1948.0 1141.25L1949.5 1141.25L1951.0 1141.25L1952.5 1141.25L1954.0 1141.25L1955.5 1141.25L1957.0 1141.25L1958.5 1141.25L1960.0 1141.25L1961.5 1141.25L1963.0 1141.25L1964.5 1141.25L1966.0 1141.25L1967.5 1141.25L1969.0 1141.25L1970.5 1141.25L1972.0 1141.25L1973.5 1141.25L1975.0 1141.25L1976.5 1141.25L1978.0 1141.25L1979.5 1141.25L1981.0 1141.25L1982.5 1141.25L1984.0 1141.25L1985.5 1141.25L1987.0 1141.25L1988.5 1141.25L1990.0 1141.25L1991.5 1141.25L1993.0 1141.25L1994.5 1141.25L1996.0 1141.25L1997.5 1141.25L1999.0 1141.25" fill="none" stroke="#adadad" stroke-width="1.15"/>
<path d="M1345.0 1141.25L1346.5 1141.25L1348.0 1141.25L1349.5 1141.25L1351.0 1141.25L1352.5 1141.25L1354.0 1141.25L1355.5 1141.25L1357.0 1141.25L1358.5 1141.25L1360.0 1141.25L1361.5 1141.25L1363.0 1141.25L1364.5 1141.25L1366.0 1141.25L1367.5 1141.25L1369.0 1141.25L1370.5 1141.25L1372.0 1141.25L1373.5 1141.25L1375.0 1141.25L1376.5 1141.25L1378.0 1141.25L1379.5 1141.25L1381.0 1141.25L1382.5 1141.25L1384.0 1141.25L1385.5 1141.25L1387.0 1141.25L1388.5 1141.25L1390.0 1141.25L1391.5 1141.25L1393.0 1141.25L1394.5 1141.25L1396.0 1141.25L1397.5 1141.25L1399.0 1141.25L1400.5 1141.25L1402.0 1141.25L1403.5 1141.25L1405.0 1141.25L1406.5 1141.25L1408.0 1141.25L1409.5 1141.25L1411.0 1141.25L1412.5 1141.25L1414.0 1141.25L1415.5 1141.25L1417.0 1141.25L1418.5 1141.25L1420.0 1141.25L1421.5 1141.25L1423.0 1141.25L1424.5 1141.25L1426.0 1141.25L1427.5 1141.25L1429.0 1141.25L1430.5 1141.25L1432.0 1141.25L1433.5 1141.25L1435.0 1141.25L1436.5 1141.25L1438.0 1141.25L1439.5 1141.25L1441.0 1141.25L1442.5 1141.25L1444.0 1141.25L1445.5 1141.25L1447.0 1141.25L1448.5 1141.25L1450.0 1141.25L1451.5 1141.25L1453.0 1141.25L1454.5 1141.25L1456.0 1141.25L1457.5 1141.25L1459.0 1141.25L1460.5 1141.25L1462.0 1141.25L1463.5 1141.25L1465.0 1141.25L1466.5 1141.25L1468.0 1141.25L1469.5 1141.25L1471.0 1141.25L1472.5 1141.25L1474.0 1141.25L1475.5 1141.25L1477.0 1141.25L1478.5 1141.25L1480.0 1141.25L1481.5 1141.25L1483.0 1141.25L1484.5 1141.25L1486.0 1141.25L1487.5 1141.25L1489.0 1141.25L1490.5 1141.25L1492.0 1141.25L1493.5 1141.25L1495.0 1141.25L1496.5 1141.25L1498.0 1141.25L1499.5 1141.25L1501.0 1141.25L1502.5 1141.25L1504.0 1141.25L1505.5 1141.25L1507.0 1141.25L1508.5 1141.25L1510.0 1141.25L1511.5 1141.25L1513.0 1141.25L1514.5 1141.25L1516.0 1141.25L1517.5 1141.25L1519.0 1141.25L1520.5 1141.25L1522.0 1141.25L1523.5 1141.25L1525.0 1141.25L1526.5 1141.25L1528.0 1141.25L1529.5 1141.25L1531.0 1141.25L1532.5 1141.25L1534.0 1141.25L1535.5 1141.25L1537.0 1141.25L1538.5 1141.25L1540.0 1141.25L1541.5 1141.25L1543.0 1141.25L1544.5 1141.25L1546.0 1141.25L1547.5 1141.25L1549.0 1141.25L1550.5 1141.25L1552.0 1141.25L1553.5 1141.25L1555.0 1141.25L1556.5 1141.25L1558.0 1141.25L1559.5 1141.25L1561.0 1141.25L1562.5 1141.23L1564.0 1141.20L1565.5 1141.09L1567.0 1140.83L1568.5 1140.30L1570.0 1139.38L1571.5 1138.04L1573.0 1136.47L1574.5 1135.06L1576.0 1134.25L1577.5 1134.32L1579.0 1135.13L1580.5 1136.23L1582.0 1137.07L1583.5 1137.35L1585.0 1137.12L1586.5 1136.75L1588.0 1136.64L1589.5 1137.02L1591.0 1137.84L1592.5 1138.86L1594.0 1139.79L1595.5 1140.47L1597.0 1140.89L1598.5 1141.10L1600.0 1141.19L1601.5 1141.21L1603.0 1141.18L1604.5 1141.07L1606.0 1140.84L1607.5 1140.45L1609.0 1139.88L1610.5 1139.20L1612.0 1138.58L1613.5 1138.21L1615.0 1138.15L1616.5 1138.30L1618.0 1138.40L1619.5 1138.14L1621.0 1137.41L1622.5 1136.41L1624.0 1135.53L1625.5 1135.20L1627.0 1135.64L1628.5 1136.70L1630.0 1138.02L1631.5 1139.20L1633.0 1140.00L1634.5 1140.38L1636.0 1140.45L1637.5 1140.36L1639.0 1140.26L1640.5 1140.25L1642.0 1140.37L1643.5 1140.57L1645.0 1140.79L1646.5 1140.98L1648.0 1141.11L1649.5 1141.19L1651.0 1141.23L1652.5 1141.24L1654.0 1141.23L1655.5 1141.19L1657.0 1141.07L1658.5 1140.77L1660.0 1140.17L1661.5 1139.11L1663.0 1137.59L1664.5 1135.79L1666.0 1134.19L1667.5 1133.31L1669.0 1133.49L1670.5 1134.65L1672.0 1136.35L1673.5 1138.04L1675.0 1139.30L1676.5 1140.02L1678.0 1140.29L1679.5 1140.30L1681.0 1140.24L1682.5 1140.25L1684.0 1140.36L1685.5 1140.56L1687.0 1140.76L1688.5 1140.89L1690.0 1140.88L1691.5 1140.67L1693.0 1140.25L1694.5 1139.64L1696.0 1138.95L1697.5 1138.35L1699.0 1137.96L1700.5 1137.74L1702.0 1137.43L1703.5 1136.73L1705.0 1135.49L1706.5 1133.93L1708.0 1132.60L1709.5 1132.09L1711.0 1132.67L1712.5 1134.10L1714.0 1135.82L1715.5 1137.26L1717.0 1138.19L1718.5 1138.66L1720.0 1138.93L1721.5 1139.19L1723.0 1139.47L1724.5 1139.66L1726.0 1139.62L1727.5 1139.31L1729.0 1138.83L1730.5 1138.39L1732.0 1138.23L1733.5 1138.45L1735.0 1138.98L1736.5 1139.66L1738.0 1140.27L1739.5 1140.72L1741.0 1140.96L1742.5 1141.02L1744.0 1140.90L1745.5 1140.59L1747.0 1140.08L1748.5 1139.43L1750.0 1138.78L1751.5 1138.34L1753.0 1138.27L1754.5 1138.60L1756.0 1139.20L1757.5 1139.88L1759.0 1140.45L1760.5 1140.84L1762.0 1141.07L1763.5 1141.18L1765.0 1141.23L1766.5 1141.24L1768.0 1141.25L1769.5 1141.25L1771.0 1141.25L1772.5 1141.25L1774.0 1141.25L1775.5 1141.25L1777.0 1141.25L1778.5 1141.25L1780.0 1141.25L1781.5 1141.25L1783.0 1141.25L1784.5 1141.25L1786.0 1141.25L1787.5 1141.25L1789.0 1141.25L1790.5 1141.25L1792.0 1141.25L1793.5 1141.25L1795.0 1141.25L1796.5 1141.25L1798.0 1141.25L1799.5 1141.25L1801.0 1141.25L1802.5 1141.25L1804.0 1141.25L1805.5 1141.25L1807.0 1141.25L1808.5 1141.25L1810.0 1141.25L1811.5 1141.25L1813.0 1141.25L1814.5 1141.25L1816.0 1141.25L1817.5 1141.25L1819.0 1141.25L1820.5 1141.25L1822.0 1141.25L1823.5 1141.25L1825.0 1141.25L1826.5 1141.25L1828.0 1141.25L1829.5 1141.25L1831.0 1141.25L1832.5 1141.24L1834.0 1141.22L1835.5 1141.15L1837.0 1141.01L1838.5 1140.73L1840.0 1140.28L1841.5 1139.66L1843.0 1138.99L1844.5 1138.45L1846.0 1138.25L1847.5 1138.45L1849.0 1138.99L1850.5 1139.66L1852.0 1140.28L1853.5 1140.73L1855.0 1141.01L1856.5 1141.15L1858.0 1141.22L1859.5 1141.24L1861.0 1141.25L1862.5 1141.25L1864.0 1141.25L1865.5 1141.25L1867.0 1141.25L1868.5 1141.25L1870.0 1141.25L1871.5 1141.25L1873.0 1141.25L1874.5 1141.25L1876.0 1141.25L1877.5 1141.25L1879.0 1141.25L1880.5 1141.25L1882.0 1141.25L1883.5 1141.25L1885.0 1141.25L1886.5 1141.25L1888.0 1141.25L1889.5 1141.25L1891.0 1141.25L1892.5 1141.25L1894.0 1141.25L1895.5 1141.25L1897.0 1141.25L1898.5 1141.25L1900.0 1141.25L1901.5 1141.25L1903.0 1141.25L1904.5 1141.25L1906.0 1141.25L1907.5 1141.25L1909.0 1141.25L1910.5 1141.25L1912.0 1141.25L1913.5 1141.25L1915.0 1141.25L1916.5 1141.25L1918.0 1141.25L1919.5 1141.25L1921.0 1141.25L1922.5 1141.25L1924.0 1141.25L1925.5 1141.25L1927.0 1141.25L1928.5 1141.25L1930.0 1141.25L1931.5 1141.25L1933.0 1141.25L1934.5 1141.25L1936.0 1141.25L1937.5 1141.25L1939.0 1141.25L1940.5 1141.25L1942.0 1141.25L1943.5 1141.25L1945.0 1141.25L1946.5 1141.25L1948.0 1141.25L1949.5 1141.25L1951.0 1141.25L1952.5 1141.25L1954.0 1141.25L1955.5 1141.25L1957.0 1141.25L1958.5 1141.25L1960.0 1141.25L1961.5 1141.25L1963.0 1141.25L1964.5 1141.25L1966.0 1141.25L1967.5 1141.25L1969.0 1141.25L1970.5 1141.25L1972.0 1141.25L1973.5 1141.25L1975.0 1141.25L1976.5 1141.25L1978.0 1141.25L1979.5 1141.25L1981.0 1141.25L1982.5 1141.25L1984.0 1141.25L1985.5 1141.25L1987.0 1141.25L1988.5 1141.25L1990.0 1141.25L1991.5 1141.25L1993.0 1141.25L1994.5 1141.25L1996.0 1141.25L1997.5 1141.25L1999.0 1141.25V1141.25H1345.0Z" fill="rgba(245,200,60,.4)" stroke="none"/>
<path d="M1345.0 1141.25L1346.5 1141.25L1348.0 1141.25L1349.5 1141.25L1351.0 1141.25L1352.5 1141.25L1354.0 1141.25L1355.5 1141.25L1357.0 1141.25L1358.5 1141.25L1360.0 1141.25L1361.5 1141.25L1363.0 1141.25L1364.5 1141.25L1366.0 1141.25L1367.5 1141.25L1369.0 1141.25L1370.5 1141.25L1372.0 1141.25L1373.5 1141.25L1375.0 1141.25L1376.5 1141.25L1378.0 1141.25L1379.5 1141.25L1381.0 1141.25L1382.5 1141.25L1384.0 1141.25L1385.5 1141.25L1387.0 1141.25L1388.5 1141.25L1390.0 1141.25L1391.5 1141.25L1393.0 1141.25L1394.5 1141.25L1396.0 1141.25L1397.5 1141.25L1399.0 1141.25L1400.5 1141.25L1402.0 1141.25L1403.5 1141.25L1405.0 1141.25L1406.5 1141.25L1408.0 1141.25L1409.5 1141.25L1411.0 1141.25L1412.5 1141.25L1414.0 1141.25L1415.5 1141.25L1417.0 1141.25L1418.5 1141.25L1420.0 1141.25L1421.5 1141.25L1423.0 1141.25L1424.5 1141.25L1426.0 1141.25L1427.5 1141.25L1429.0 1141.25L1430.5 1141.25L1432.0 1141.25L1433.5 1141.25L1435.0 1141.25L1436.5 1141.25L1438.0 1141.25L1439.5 1141.25L1441.0 1141.25L1442.5 1141.25L1444.0 1141.25L1445.5 1141.25L1447.0 1141.25L1448.5 1141.25L1450.0 1141.25L1451.5 1141.25L1453.0 1141.25L1454.5 1141.25L1456.0 1141.25L1457.5 1141.25L1459.0 1141.25L1460.5 1141.25L1462.0 1141.25L1463.5 1141.25L1465.0 1141.25L1466.5 1141.25L1468.0 1141.25L1469.5 1141.25L1471.0 1141.25L1472.5 1141.25L1474.0 1141.25L1475.5 1141.25L1477.0 1141.25L1478.5 1141.25L1480.0 1141.25L1481.5 1141.25L1483.0 1141.25L1484.5 1141.25L1486.0 1141.25L1487.5 1141.25L1489.0 1141.25L1490.5 1141.25L1492.0 1141.25L1493.5 1141.25L1495.0 1141.25L1496.5 1141.25L1498.0 1141.25L1499.5 1141.25L1501.0 1141.25L1502.5 1141.25L1504.0 1141.25L1505.5 1141.25L1507.0 1141.25L1508.5 1141.25L1510.0 1141.25L1511.5 1141.25L1513.0 1141.25L1514.5 1141.25L1516.0 1141.25L1517.5 1141.25L1519.0 1141.25L1520.5 1141.25L1522.0 1141.25L1523.5 1141.25L1525.0 1141.25L1526.5 1141.25L1528.0 1141.25L1529.5 1141.25L1531.0 1141.25L1532.5 1141.25L1534.0 1141.25L1535.5 1141.25L1537.0 1141.25L1538.5 1141.25L1540.0 1141.25L1541.5 1141.25L1543.0 1141.25L1544.5 1141.25L1546.0 1141.25L1547.5 1141.25L1549.0 1141.25L1550.5 1141.25L1552.0 1141.25L1553.5 1141.25L1555.0 1141.25L1556.5 1141.25L1558.0 1141.25L1559.5 1141.25L1561.0 1141.25L1562.5 1141.23L1564.0 1141.20L1565.5 1141.09L1567.0 1140.83L1568.5 1140.30L1570.0 1139.38L1571.5 1138.04L1573.0 1136.47L1574.5 1135.06L1576.0 1134.25L1577.5 1134.32L1579.0 1135.13L1580.5 1136.23L1582.0 1137.07L1583.5 1137.35L1585.0 1137.12L1586.5 1136.75L1588.0 1136.64L1589.5 1137.02L1591.0 1137.84L1592.5 1138.86L1594.0 1139.79L1595.5 1140.47L1597.0 1140.89L1598.5 1141.10L1600.0 1141.19L1601.5 1141.21L1603.0 1141.18L1604.5 1141.07L1606.0 1140.84L1607.5 1140.45L1609.0 1139.88L1610.5 1139.20L1612.0 1138.58L1613.5 1138.21L1615.0 1138.15L1616.5 1138.30L1618.0 1138.40L1619.5 1138.14L1621.0 1137.41L1622.5 1136.41L1624.0 1135.53L1625.5 1135.20L1627.0 1135.64L1628.5 1136.70L1630.0 1138.02L1631.5 1139.20L1633.0 1140.00L1634.5 1140.38L1636.0 1140.45L1637.5 1140.36L1639.0 1140.26L1640.5 1140.25L1642.0 1140.37L1643.5 1140.57L1645.0 1140.79L1646.5 1140.98L1648.0 1141.11L1649.5 1141.19L1651.0 1141.23L1652.5 1141.24L1654.0 1141.23L1655.5 1141.19L1657.0 1141.07L1658.5 1140.77L1660.0 1140.17L1661.5 1139.11L1663.0 1137.59L1664.5 1135.79L1666.0 1134.19L1667.5 1133.31L1669.0 1133.49L1670.5 1134.65L1672.0 1136.35L1673.5 1138.04L1675.0 1139.30L1676.5 1140.02L1678.0 1140.29L1679.5 1140.30L1681.0 1140.24L1682.5 1140.25L1684.0 1140.36L1685.5 1140.56L1687.0 1140.76L1688.5 1140.89L1690.0 1140.88L1691.5 1140.67L1693.0 1140.25L1694.5 1139.64L1696.0 1138.95L1697.5 1138.35L1699.0 1137.96L1700.5 1137.74L1702.0 1137.43L1703.5 1136.73L1705.0 1135.49L1706.5 1133.93L1708.0 1132.60L1709.5 1132.09L1711.0 1132.67L1712.5 1134.10L1714.0 1135.82L1715.5 1137.26L1717.0 1138.19L1718.5 1138.66L1720.0 1138.93L1721.5 1139.19L1723.0 1139.47L1724.5 1139.66L1726.0 1139.62L1727.5 1139.31L1729.0 1138.83L1730.5 1138.39L1732.0 1138.23L1733.5 1138.45L1735.0 1138.98L1736.5 1139.66L1738.0 1140.27L1739.5 1140.72L1741.0 1140.96L1742.5 1141.02L1744.0 1140.90L1745.5 1140.59L1747.0 1140.08L1748.5 1139.43L1750.0 1138.78L1751.5 1138.34L1753.0 1138.27L1754.5 1138.60L1756.0 1139.20L1757.5 1139.88L1759.0 1140.45L1760.5 1140.84L1762.0 1141.07L1763.5 1141.18L1765.0 1141.23L1766.5 1141.24L1768.0 1141.25L1769.5 1141.25L1771.0 1141.25L1772.5 1141.25L1774.0 1141.25L1775.5 1141.25L1777.0 1141.25L1778.5 1141.25L1780.0 1141.25L1781.5 1141.25L1783.0 1141.25L1784.5 1141.25L1786.0 1141.25L1787.5 1141.25L1789.0 1141.25L1790.5 1141.25L1792.0 1141.25L1793.5 1141.25L1795.0 1141.25L1796.5 1141.25L1798.0 1141.25L1799.5 1141.25L1801.0 1141.25L1802.5 1141.25L1804.0 1141.25L1805.5 1141.25L1807.0 1141.25L1808.5 1141.25L1810.0 1141.25L1811.5 1141.25L1813.0 1141.25L1814.5 1141.25L1816.0 1141.25L1817.5 1141.25L1819.0 1141.25L1820.5 1141.25L1822.0 1141.25L1823.5 1141.25L1825.0 1141.25L1826.5 1141.25L1828.0 1141.25L1829.5 1141.25L1831.0 1141.25L1832.5 1141.24L1834.0 1141.22L1835.5 1141.15L1837.0 1141.01L1838.5 1140.73L1840.0 1140.28L1841.5 1139.66L1843.0 1138.99L1844.5 1138.45L1846.0 1138.25L1847.5 1138.45L1849.0 1138.99L1850.5 1139.66L1852.0 1140.28L1853.5 1140.73L1855.0 1141.01L1856.5 1141.15L1858.0 1141.22L1859.5 1141.24L1861.0 1141.25L1862.5 1141.25L1864.0 1141.25L1865.5 1141.25L1867.0 1141.25L1868.5 1141.25L1870.0 1141.25L1871.5 1141.25L1873.0 1141.25L1874.5 1141.25L1876.0 1141.25L1877.5 1141.25L1879.0 1141.25L1880.5 1141.25L1882.0 1141.25L1883.5 1141.25L1885.0 1141.25L1886.5 1141.25L1888.0 1141.25L1889.5 1141.25L1891.0 1141.25L1892.5 1141.25L1894.0 1141.25L1895.5 1141.25L1897.0 1141.25L1898.5 1141.25L1900.0 1141.25L1901.5 1141.25L1903.0 1141.25L1904.5 1141.25L1906.0 1141.25L1907.5 1141.25L1909.0 1141.25L1910.5 1141.25L1912.0 1141.25L1913.5 1141.25L1915.0 1141.25L1916.5 1141.25L1918.0 1141.25L1919.5 1141.25L1921.0 1141.25L1922.5 1141.25L1924.0 1141.25L1925.5 1141.25L1927.0 1141.25L1928.5 1141.25L1930.0 1141.25L1931.5 1141.25L1933.0 1141.25L1934.5 1141.25L1936.0 1141.25L1937.5 1141.25L1939.0 1141.25L1940.5 1141.25L1942.0 1141.25L1943.5 1141.25L1945.0 1141.25L1946.5 1141.25L1948.0 1141.25L1949.5 1141.25L1951.0 1141.25L1952.5 1141.25L1954.0 1141.25L1955.5 1141.25L1957.0 1141.25L1958.5 1141.25L1960.0 1141.25L1961.5 1141.25L1963.0 1141.25L1964.5 1141.25L1966.0 1141.25L1967.5 1141.25L1969.0 1141.25L1970.5 1141.25L1972.0 1141.25L1973.5 1141.25L1975.0 1141.25L1976.5 1141.25L1978.0 1141.25L1979.5 1141.25L1981.0 1141.25L1982.5 1141.25L1984.0 1141.25L1985.5 1141.25L1987.0 1141.25L1988.5 1141.25L1990.0 1141.25L1991.5 1141.25L1993.0 1141.25L1994.5 1141.25L1996.0 1141.25L1997.5 1141.25L1999.0 1141.25" fill="none" stroke="#ecc349" stroke-width="1.25"/>
<path d="M1345 1141.25H2000" stroke="#c592eb" stroke-width="1.7" fill="none"/>
<path d="M1345.0 1252.50V1252.50H1439.3V1285.80H1564.3V1279.50H1574.8V1271.50H1606.3V1254.00H1616.8V1248.40H1626.6V1250.50H1658.0V1216.50H1700.0V1210.50H1742.0V1214.75H1910.0V1269.00H1920.0V1271.50H2000.0V1330.25H1345Z" fill="rgba(196,140,248,.17)" stroke="none"/>
<path d="M1345.0 1263.00V1263.00H1439.3V1302.60H1564.3V1293.50H1574.8V1288.60H1606.3V1283.70H1616.8V1276.00H1627.3V1281.60H1637.8V1279.50H1648.3V1273.20H1658.8V1277.00H1669.3V1273.20H1679.8V1270.75H1689.6V1262.70H1700.0V1257.00H1710.6V1273.20H1721.0V1269.70H1731.6V1265.50H1742.0V1269.00H1752.6V1265.50H1763.0V1263.00H1836.6V1258.90H1910.0V1279.50H2000.0V1330.25H1345Z" fill="rgba(196,140,248,.20)" stroke="none"/>
<path d="M1345.0 1252.50V1252.50H1439.3V1285.80H1564.3V1279.50H1574.8V1271.50H1606.3V1254.00H1616.8V1248.40H1626.6V1250.50H1658.0V1216.50H1700.0V1210.50H1742.0V1214.75H1910.0V1269.00H1920.0V1271.50H2000.0" fill="none" stroke="#d4b0f2" stroke-width="1.5"/>
<path d="M1345.0 1263.00V1263.00H1439.3V1302.60H1564.3V1293.50H1574.8V1288.60H1606.3V1283.70H1616.8V1276.00H1627.3V1281.60H1637.8V1279.50H1648.3V1273.20H1658.8V1277.00H1669.3V1273.20H1679.8V1270.75H1689.6V1262.70H1700.0V1257.00H1710.6V1273.20H1721.0V1269.70H1731.6V1265.50H1742.0V1269.00H1752.6V1265.50H1763.0V1263.00H1836.6V1258.90H1910.0V1279.50H2000.0" fill="none" stroke="#b680e4" stroke-width="1.8"/>
<path d="M1345 1330.25H2000" stroke="#bb86e7" stroke-width="2.2" fill="none"/>
<path d="M1345.0 1514.00V1514.00H1438.2V1516.00H1564.3V1499.25H1606.3V1484.50H1616.8V1482.50H1648.3V1472.00H1658.8V1465.30H1689.6V1453.00H1700.0V1449.20H1731.6V1440.80H1742.0V1432.40H2000.0V1517.50H1345Z" fill="rgba(70,140,80,.26)" stroke="none"/>
<path d="M1345.0 1514.00V1514.00H1438.2V1516.00H1564.3V1499.25H1606.3V1484.50H1616.8V1482.50H1648.3V1472.00H1658.8V1465.30H1689.6V1453.00H1700.0V1449.20H1731.6V1440.80H1742.0V1432.40H2000.0" fill="none" stroke="#66966d" stroke-width="1.8"/>
<path d="M1345 1517.50H2000" stroke="#6b9a71" stroke-width="2.4" fill="none"/>
</svg>
<div class="abs" style="left:433.5px;top:940px;width:100px;height:26px;overflow:hidden"><div class="tx dv" style="left:-9.7px;top:3.58px;font-size:20px;letter-spacing:.43px;color:#7a7a7a">19:55:30</div></div>
<div class="tx dv" id="t_ts0" style="left:633.00px;top:943.00px;font-size:20px;letter-spacing:0.429px;color:#7a7a7a;">19:55:40</div>
<div class="tx dv" id="t_ts1" style="left:842.20px;top:943.00px;font-size:20px;letter-spacing:0.429px;color:#7a7a7a;">19:55:50</div>
<div class="tx dv" id="t_ts2" style="left:1051.40px;top:943.00px;font-size:20px;letter-spacing:0.429px;color:#7a7a7a;">19:56:00</div>
<div class="tx dv" id="t_ts3" style="left:1260.60px;top:943.00px;font-size:20px;letter-spacing:0.429px;color:#7a7a7a;">19:56:10</div>
<div class="tx dv" id="t_ts4" style="left:1469.80px;top:943.00px;font-size:20px;letter-spacing:0.429px;color:#7a7a7a;">19:56:20</div>
<div class="tx dv" id="t_ts5" style="left:1679.00px;top:943.00px;font-size:20px;letter-spacing:0.429px;color:#7a7a7a;">19:56:30</div>
<div class="tx dv" id="t_ts6" style="left:1888.20px;top:943.00px;font-size:20px;letter-spacing:0.429px;color:#7a7a7a;">19:56:40</div>
<div class="tx dv" id="t_c_cpu" style="left:449.50px;top:973.00px;font-size:20px;letter-spacing:0.031px;color:#7a7a7a;">CPU usage</div>
<div class="tx dv" id="t_c_100" style="left:450.00px;top:1003.00px;font-size:20px;letter-spacing:-0.833px;color:#7a7a7a;">100%</div>
<div class="tx dv" id="t_c_50" style="left:451.00px;top:1068.00px;font-size:20px;letter-spacing:-1.500px;color:#7a7a7a;">50%</div>
<div class="tx dv" id="t_c_js" style="left:449.30px;top:1161.00px;font-size:20px;letter-spacing:0.155px;color:#7a7a7a;">JS heap size</div>
<div class="tx dv" id="t_c_40" style="left:450.20px;top:1191.00px;font-size:20px;letter-spacing:0.233px;color:#7a7a7a;">40.0 MB</div>
<div class="tx dv" id="t_c_20" style="left:450.20px;top:1256.00px;font-size:20px;letter-spacing:0.233px;color:#7a7a7a;">20.0 MB</div>
<div class="tx dv" id="t_c_dom" style="left:449.20px;top:1350.00px;font-size:20px;letter-spacing:0.350px;color:#7a7a7a;">DOM Nodes</div>
<div class="tx dv" id="t_c_6k" style="left:450.20px;top:1380.00px;font-size:20px;letter-spacing:0.675px;color:#7a7a7a;">6,000</div>
<div class="tx dv" id="t_c_3k" style="left:450.20px;top:1445.00px;font-size:20px;letter-spacing:0.675px;color:#7a7a7a;">3,000</div>
</section>
</main></body></html>
